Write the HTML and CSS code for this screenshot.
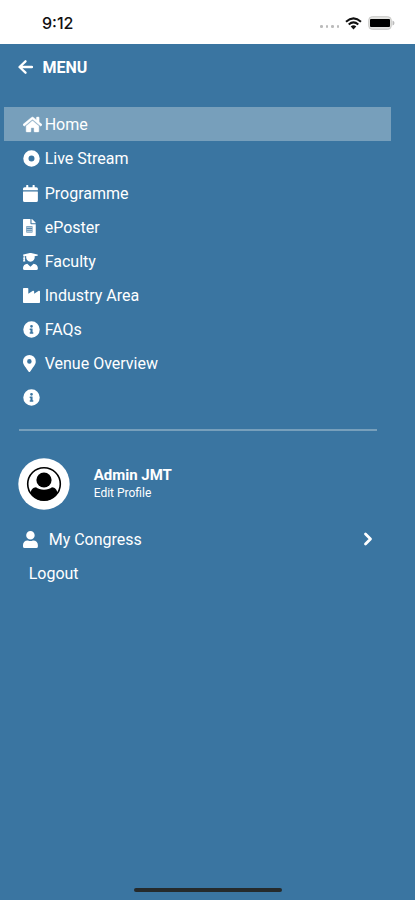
FILE: index.html
```html
<!DOCTYPE html>
<html lang="en">
<head>
<meta charset="utf-8">
<title>Menu</title>
<link rel="stylesheet" href="styles.css">
</head>
<body>
<div class="screen">
  <header class="status">
    <span class="time">9:12</span>
    <div class="indicators">
      <span class="dots"><i></i><i></i><i></i><i></i></span>
      <svg class="wifi" viewBox="0 0 17 13"><path d="M1 4.700Q8.500-2 16 4.700M3.700 7.500Q8.500 3.300 13.300 7.500" fill="none" stroke="#111" stroke-width="2"/><path d="M5.700 9.500Q8.500 7.200 11.300 9.500L8.500 12.500z" fill="#111"/></svg>
      <svg class="battery" viewBox="0 0 27 14"><rect x=".7" y=".7" width="22.600" height="12.600" rx="3.500" fill="#e4e4e2" stroke="#c9c9c7"/><path d="M24.500 4.500q2 .5 2 2.500t-2 2.500z" fill="#bbb"/><rect x="2" y="3" width="20" height="8" rx="1" fill="#000"/></svg>
    </div>
  </header>
  <div class="title">
    <svg class="back" viewBox="0 0 15 14"><path d="M7.500 1.300L1.500 7l6 5.700M1.800 7H14" fill="none" stroke="currentColor" stroke-width="2.300" stroke-linecap="round" stroke-linejoin="round"/></svg>
    <h1>MENU</h1>
  </div>
  <nav class="menu">
    <a class="item active"><svg class="icon home" viewBox="0 0 576 512"><path d="M280 148L96 300v164a16 16 0 0 0 16 16l112-.3a16 16 0 0 0 16-16V368a16 16 0 0 1 16-16h64a16 16 0 0 1 16 16v95.600a16 16 0 0 0 16 16.100l112 .3a16 16 0 0 0 16-16V300L296 148a12 12 0 0 0-16 0zM572 251l-84-69V44a12 12 0 0 0-12-12h-56a12 12 0 0 0-12 12v72l-90-74a48 48 0 0 0-61 0L4 251a12 12 0 0 0-2 17l26 31a12 12 0 0 0 17 2L280 107a12 12 0 0 1 15 0l236 194a12 12 0 0 0 17-2l25-31a12 12 0 0 0-1-17z"/></svg><span>Home</span></a>
    <a class="item"><svg class="icon" viewBox="0 0 512 512"><path fill-rule="evenodd" d="M256 8a248 248 0 1 0 0 496 248 248 0 0 0 0-496zm0 158a90 90 0 1 1 0 180 90 90 0 0 1 0-180z"/></svg><span>Live Stream</span></a>
    <a class="item lower"><svg class="icon" viewBox="0 0 512 512"><path d="M12 192h424a12 12 0 0 1 12 12v260a48 48 0 0 1-48 48H48a48 48 0 0 1-48-48V204a12 12 0 0 1 12-12zm436-44v-36a48 48 0 0 0-48-48h-48V12a12 12 0 0 0-12-12h-40a12 12 0 0 0-12 12v52H160V12a12 12 0 0 0-12-12h-40a12 12 0 0 0-12 12v52H48a48 48 0 0 0-48 48v36a12 12 0 0 0 12 12h424a12 12 0 0 0 12-12z"/></svg><span>Programme</span></a>
    <a class="item"><svg class="icon" viewBox="0 0 512 512"><path fill-rule="evenodd" d="M224 136V0H24A24 24 0 0 0 0 24v464a24 24 0 0 0 24 24h336a24 24 0 0 0 24-24V160H248a24 24 0 0 1-24-24zm160-14v6H256V0h6a24 24 0 0 1 17 7l98 98a24 24 0 0 1 7 17zM100 220h184v184H100z"/><path opacity=".6" d="M110 230h164v42H110zm0 62h164v38H110zm0 56h164v42H110z"/></svg><span>ePoster</span></a>
    <a class="item"><svg class="icon" viewBox="0 0 512 512"><path d="M319 320l-95 96-95-96C58 323 0 382 0 454v10a48 48 0 0 0 48 48h352a48 48 0 0 0 48-48v-10c0-72-58-131-129-134zM13 80l6 1v58a24 24 0 0 0-2 41L2 243c-2 7 2 13 7 13h52c5 0 9-6 7-13l-15-63a24 24 0 0 0-2-41V89l49 12a128 128 0 1 0 248 0l87-21c17-4 17-28 0-32L243 2a83 83 0 0 0-38 0L13 48c-17 4-17 28 0 32z"/></svg><span>Faculty</span></a>
    <a class="item"><svg class="icon" viewBox="0 0 512 512"><path d="M475 116L336 205v-69c0-19-21-30-37-20l-139 89V56a24 24 0 0 0-24-24H24A24 24 0 0 0 0 56v400a24 24 0 0 0 24 24h464a24 24 0 0 0 24-24V136c0-19-21-30-37-20z"/></svg><span>Industry Area</span></a>
    <a class="item"><svg class="icon" viewBox="0 0 512 512"><path fill-rule="evenodd" d="M256 8a248 248 0 1 0 0 496 248 248 0 0 0 0-496zm0 110a42 42 0 1 1 0 84 42 42 0 0 1 0-84zm56 254a12 12 0 0 1-12 12h-88a12 12 0 0 1-12-12v-24a12 12 0 0 1 12-12h12v-64h-12a12 12 0 0 1-12-12v-24a12 12 0 0 1 12-12h64a12 12 0 0 1 12 12v100h12a12 12 0 0 1 12 12z"/></svg><span>FAQs</span></a>
    <a class="item"><svg class="icon" viewBox="0 0 512 512"><path fill-rule="evenodd" d="M172 502C27 291 0 270 0 192a192 192 0 0 1 384 0c0 78-27 99-172 310a24 24 0 0 1-40 0zm20-242a68 68 0 1 0 0-136 68 68 0 0 0 0 136z"/></svg><span>Venue Overview</span></a>
    <a class="item"><svg class="icon" viewBox="0 0 512 512"><path fill-rule="evenodd" d="M256 8a248 248 0 1 0 0 496 248 248 0 0 0 0-496zm0 110a42 42 0 1 1 0 84 42 42 0 0 1 0-84zm56 254a12 12 0 0 1-12 12h-88a12 12 0 0 1-12-12v-24a12 12 0 0 1 12-12h12v-64h-12a12 12 0 0 1-12-12v-24a12 12 0 0 1 12-12h64a12 12 0 0 1 12 12v100h12a12 12 0 0 1 12 12z"/></svg></a>
  </nav>
  <hr class="divider">
  <section class="profile">
    <svg class="avatar" viewBox="0 0 52 52"><circle cx="26" cy="26" r="25.700" fill="#fff"/><circle cx="26" cy="26" r="16.300" fill="#fff" stroke="#000" stroke-width="1.600"/><circle cx="26" cy="22" r="7.600"/><path d="M12.500 35.500c.5-4 2.500-5.800 5.500-6.200 3.500 3.200 12.500 3.200 16 0 3 .4 5 2.200 5.500 6.200A16.500 16.500 0 0 1 12.500 35.500z"/></svg>
    <div class="who"><strong>Admin JMT</strong><span>Edit Profile</span></div>
  </section>
  <a class="congress">
    <svg class="icon" viewBox="0 0 512 512"><path d="M224 256a128 128 0 1 0 0-256 128 128 0 0 0 0 256zm90 32h-17a174 174 0 0 1-146 0h-17A134 134 0 0 0 0 422v42a48 48 0 0 0 48 48h352a48 48 0 0 0 48-48v-42a134 134 0 0 0-134-134z"/></svg>
    <span>My Congress</span>
    <svg class="chevron" viewBox="0 0 10 16"><path d="M2.500 3L7.500 8l-5 5" fill="none" stroke="currentColor" stroke-width="2.800" stroke-linecap="round" stroke-linejoin="round"/></svg>
  </a>
  <a class="logout">Logout</a>
  <div class="grabber"></div>
</div>
</body>
</html>
```

FILE: styles.css
```css
* { box-sizing: border-box; }
body { margin: 0; font-family: Roboto, sans-serif; color: #fff; }
.screen {
  display: flex;
  flex-direction: column;
  width: 415px;
  height: 900px;
  background: #3a75a1;
  font-size: 16px;
}
.status {
  display: flex;
  align-items: center;
  justify-content: space-between;
  height: 44px;
  padding: 2px 20px 0 42px;
  background: #fff;
  color: #111;
}
.time { font: 500 16px/20px Inter, sans-serif; }
.indicators { display: flex; align-items: center; }
.dots { display: flex; gap: 3px; margin: 7px 6px 0 0; }
.dots i { width: 2.500px; height: 2.500px; border-radius: 50%; background: #bbb; }
.wifi { width: 17px; height: 13px; margin-right: 6px; }
.battery { width: 27px; height: 14px; }
.title { display: flex; align-items: center; height: 46px; padding-left: 18px; }
.back { width: 15px; height: 14px; margin-right: 9.500px; }
h1 { margin: 0; font-size: 16px; font-weight: 700; }
.menu { margin: 17px 24px 0 4px; }
.item { display: flex; align-items: center; height: 34px; padding-left: 19px; }
.lower { margin-top: 1px; }
.active { background: #779fbb; }
.icon { flex: none; width: 17px; height: 17px; margin-right: 4.700px; fill: currentColor; }
.home { width: 19px; margin-right: 2.700px; stroke: currentColor; stroke-width: 14; }
.divider { width: 358px; height: 2px; margin: 15px 0 0 19px; border: 0; background: #779fbb; }
.profile { display: flex; align-items: center; height: 52px; margin: 27px 0 0 18px; }
.avatar { width: 52px; height: 52px; margin-right: 23.700px; }
.who { display: flex; flex-direction: column; }
.who strong { font-size: 15px; line-height: 19px; }
.who span { font-size: 12px; line-height: 17px; }
.congress { display: flex; align-items: center; height: 34px; margin-top: 12px; padding: 0 42px 0 23px; }
.congress .icon { margin-right: 8.700px; }
.chevron { width: 10px; height: 16px; margin-left: auto; }
.logout { height: 34px; margin-top: 1px; padding-left: 28.700px; line-height: 34px; }
.grabber { width: 148px; height: 4px; margin: auto auto 8px 134px; border-radius: 2px; background: #252a2b; }
```
